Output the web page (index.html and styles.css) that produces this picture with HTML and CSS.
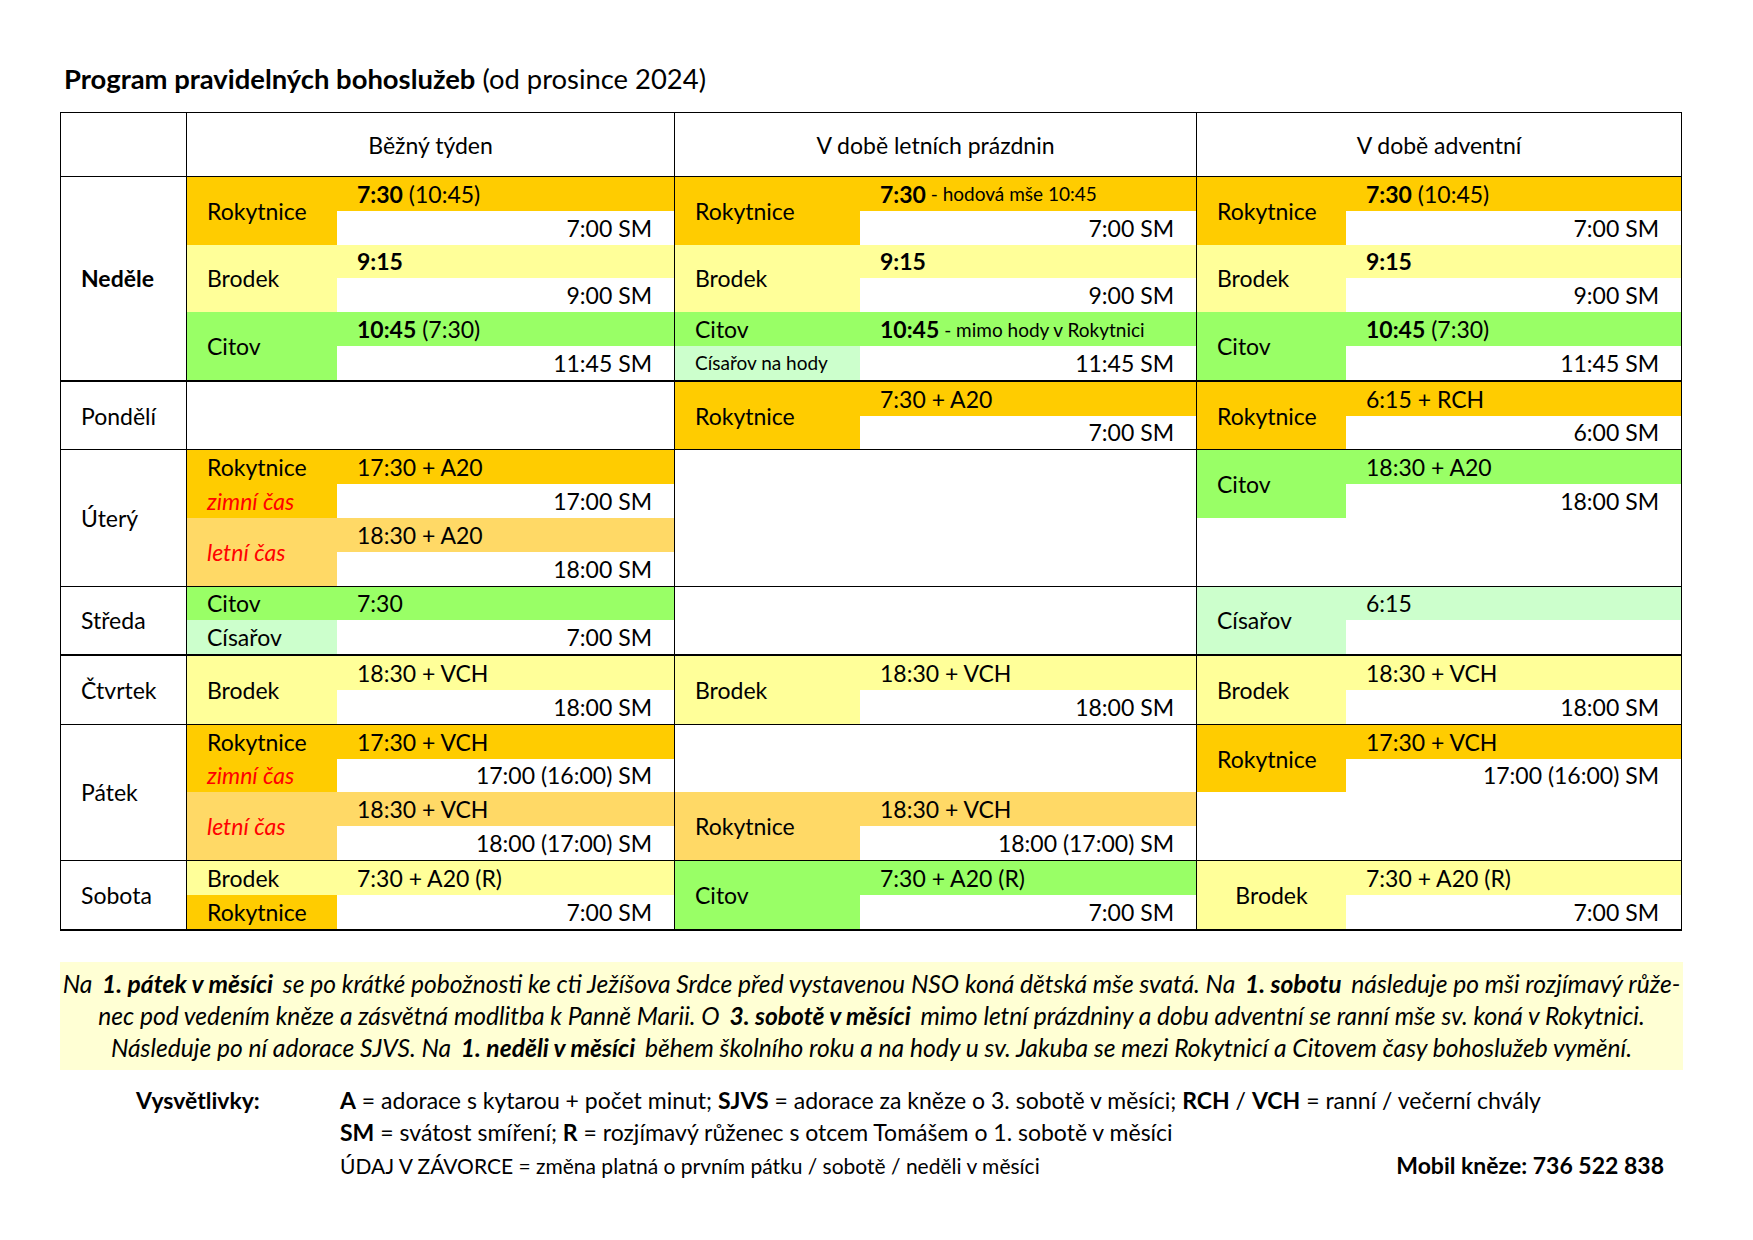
FILE: index.html
```html
<!DOCTYPE html>
<html lang="cs">
<head>
<meta charset="utf-8">
<title>Program pravidelných bohoslužeb</title>
<link rel="stylesheet" href="styles.css">
</head>
<body>
<div class="page">
  <h1 class="title"><b>Program pravidelných bohoslužeb</b> (od prosince 2024)</h1>

  <table class="sched-table">
    <colgroup>
      <col class="col-day">
      <col class="col-b">
      <col class="col-l">
      <col class="col-a">
    </colgroup>
    <tr class="head">
      <th></th>
      <th>Běžný týden</th>
      <th>V době letních prázdnin</th>
      <th>V době adventní</th>
    </tr>

    <!-- Neděle -->
    <tr class="thick">
      <th class="day bold">Neděle</th>
      <td class="c2"><div class="sched">
        <div class="pl or s2">Rokytnice</div><div class="tm or"><b>7:30</b>&nbsp;(10:45)</div><div class="sm">7:00 SM</div>
        <div class="pl ye s2">Brodek</div><div class="tm ye"><b>9:15</b></div><div class="sm">9:00 SM</div>
        <div class="pl gr s2">Citov</div><div class="tm gr"><b>10:45</b>&nbsp;(7:30)</div><div class="sm">11:45 SM</div>
      </div></td>
      <td class="c3"><div class="sched">
        <div class="pl or s2">Rokytnice</div><div class="tm or"><b>7:30</b><span class="sml">&nbsp;- hodová mše 10:45</span></div><div class="sm">7:00 SM</div>
        <div class="pl ye s2">Brodek</div><div class="tm ye"><b>9:15</b></div><div class="sm">9:00 SM</div>
        <div class="pl gr">Citov</div><div class="tm gr"><b>10:45</b><span class="sml">&nbsp;- mimo hody v Rokytnici</span></div>
        <div class="pl lg sml">Císařov na hody</div><div class="sm">11:45 SM</div>
      </div></td>
      <td class="c4"><div class="sched">
        <div class="pl or s2">Rokytnice</div><div class="tm or"><b>7:30</b>&nbsp;(10:45)</div><div class="sm">7:00 SM</div>
        <div class="pl ye s2">Brodek</div><div class="tm ye"><b>9:15</b></div><div class="sm">9:00 SM</div>
        <div class="pl gr s2">Citov</div><div class="tm gr"><b>10:45</b>&nbsp;(7:30)</div><div class="sm">11:45 SM</div>
      </div></td>
    </tr>

    <!-- Pondělí -->
    <tr>
      <th class="day">Pondělí</th>
      <td class="c2"></td>
      <td class="c3"><div class="sched">
        <div class="pl or s2">Rokytnice</div><div class="tm or">7:30 + A20</div><div class="sm">7:00 SM</div>
      </div></td>
      <td class="c4"><div class="sched">
        <div class="pl or s2">Rokytnice</div><div class="tm or">6:15 + RCH</div><div class="sm">6:00 SM</div>
      </div></td>
    </tr>

    <!-- Úterý -->
    <tr>
      <th class="day">Úterý</th>
      <td class="c2"><div class="sched">
        <div class="pl or">Rokytnice</div><div class="tm or">17:30 + A20</div>
        <div class="pl or red">zimní čas</div><div class="sm">17:00 SM</div>
        <div class="pl lo s2 red">letní čas</div><div class="tm lo">18:30 + A20</div><div class="sm">18:00 SM</div>
      </div></td>
      <td class="c3"></td>
      <td class="c4"><div class="sched">
        <div class="pl gr s2">Citov</div><div class="tm gr">18:30 + A20</div><div class="sm">18:00 SM</div>
        <div class="blank s2"></div>
      </div></td>
    </tr>

    <!-- Středa -->
    <tr class="thick">
      <th class="day">Středa</th>
      <td class="c2"><div class="sched">
        <div class="pl gr">Citov</div><div class="tm gr">7:30</div>
        <div class="pl lg">Císařov</div><div class="sm">7:00 SM</div>
      </div></td>
      <td class="c3"></td>
      <td class="c4"><div class="sched">
        <div class="pl lg s2">Císařov</div><div class="tm lg">6:15</div><div class="sm"></div>
      </div></td>
    </tr>

    <!-- Čtvrtek -->
    <tr>
      <th class="day">Čtvrtek</th>
      <td class="c2"><div class="sched">
        <div class="pl ye s2">Brodek</div><div class="tm ye">18:30 + VCH</div><div class="sm">18:00 SM</div>
      </div></td>
      <td class="c3"><div class="sched">
        <div class="pl ye s2">Brodek</div><div class="tm ye">18:30 + VCH</div><div class="sm">18:00 SM</div>
      </div></td>
      <td class="c4"><div class="sched">
        <div class="pl ye s2">Brodek</div><div class="tm ye">18:30 + VCH</div><div class="sm">18:00 SM</div>
      </div></td>
    </tr>

    <!-- Pátek -->
    <tr>
      <th class="day">Pátek</th>
      <td class="c2"><div class="sched">
        <div class="pl or">Rokytnice</div><div class="tm or">17:30 + VCH</div>
        <div class="pl or red">zimní čas</div><div class="sm">17:00 (16:00) SM</div>
        <div class="pl lo s2 red">letní čas</div><div class="tm lo">18:30 + VCH</div><div class="sm">18:00 (17:00) SM</div>
      </div></td>
      <td class="c3"><div class="sched">
        <div class="blank s2"></div>
        <div class="pl lo s2">Rokytnice</div><div class="tm lo">18:30 + VCH</div><div class="sm">18:00 (17:00) SM</div>
      </div></td>
      <td class="c4"><div class="sched">
        <div class="pl or s2">Rokytnice</div><div class="tm or">17:30 + VCH</div><div class="sm">17:00 (16:00) SM</div>
        <div class="blank s2"></div>
      </div></td>
    </tr>

    <!-- Sobota -->
    <tr class="thick">
      <th class="day">Sobota</th>
      <td class="c2"><div class="sched">
        <div class="pl ye">Brodek</div><div class="tm ye">7:30 + A20 (R)</div>
        <div class="pl or">Rokytnice</div><div class="sm">7:00 SM</div>
      </div></td>
      <td class="c3"><div class="sched">
        <div class="pl gr s2">Citov</div><div class="tm gr">7:30 + A20 (R)</div><div class="sm">7:00 SM</div>
      </div></td>
      <td class="c4"><div class="sched">
        <div class="pl ye s2 center">Brodek</div><div class="tm ye">7:30 + A20 (R)</div><div class="sm">7:00 SM</div>
      </div></td>
    </tr>
  </table>

  <div class="note">
    <div class="note-line">Na <b>1. pátek v měsíci</b> se po krátké pobožnosti ke cti Ježíšova Srdce před vystavenou NSO koná dětská mše svatá. Na <b>1. sobotu</b> následuje po mši rozjímavý růže-</div>
    <div class="note-line">nec pod vedením kněze a zásvětná modlitba k Panně Marii. O <b>3. sobotě v měsíci</b> mimo letní prázdniny a dobu adventní se ranní mše sv. koná v Rokytnici.</div>
    <div class="note-line">Následuje po ní adorace SJVS. Na <b>1. neděli v měsíci</b> během školního roku a na hody u sv. Jakuba se mezi Rokytnicí a Citovem časy bohoslužeb vymění.</div>
  </div>

  <div class="legend">
    <div class="legend-label">Vysvětlivky:</div>
    <div class="legend-body">
      <div class="legend-line"><b>A</b> = adorace s kytarou + počet minut; <b>SJVS</b> = adorace za kněze o 3. sobotě v měsíci; <b>RCH</b> / <b>VCH</b> = ranní / večerní chvály</div>
      <div class="legend-line"><b>SM</b> = svátost smíření; <b>R</b> = rozjímavý růženec s otcem Tomášem o 1. sobotě v měsíci</div>
      <div class="legend-line last"><span class="legend-small">ÚDAJ V ZÁVORCE = změna platná o prvním pátku / sobotě / neděli v měsíci</span><b class="mobil">Mobil kněze: 736 522 838</b></div>
    </div>
  </div>
</div>
</body>
</html>
```

FILE: styles.css
```css
* { box-sizing: border-box; }

body {
  margin: 0;
  background: #fff;
  color: #000;
  font-family: Lato, "Open Sans", "DejaVu Sans", sans-serif;
}

.page {
  width: 1753px;
  padding: 63px 72px 0 60px;
}

.title {
  margin: 0 0 17px 4px;
  font-size: 27.4px;
  line-height: 32px;
  font-weight: 400;
}
.title b { font-weight: 700; }

/* ---------- table ---------- */
.sched-table {
  border-collapse: collapse;
  table-layout: fixed;
  width: 1621px;
  font-size: 23px;
}
.col-day { width: 126px; }
.col-b { width: 488px; }
.col-l { width: 522px; }
.col-a { width: 485px; }

.sched-table th,
.sched-table td {
  border: 1px solid #000;
  padding: 0;
  vertical-align: top;
}

.head th {
  height: 64px;
  font-weight: 400;
  text-align: center;
  vertical-align: middle;
}

.sched-table th.day {
  text-align: left;
  vertical-align: middle;
  padding-left: 20px;
  font-weight: 400;
}
.sched-table th.day.bold { font-weight: 700; }

.thick th,
.thick td { border-bottom-width: 2px; }

.sched {
  display: grid;
  grid-auto-rows: 33.8px;
}
.c2 .sched { grid-template-columns: 150px 1fr; }
.c3 .sched { grid-template-columns: 185px 1fr; }
.c4 .sched { grid-template-columns: 149px 1fr; }

.pl, .tm, .sm {
  display: flex;
  align-items: center;
  white-space: nowrap;
}
.pl { padding-left: 20px; }
.pl.center { justify-content: center; padding-left: 0; }
.tm { padding-left: 20px; }
.sm {
  justify-content: flex-end;
  padding-right: 22px;
  background: #fff;
}
.s2 { grid-row: span 2; }
.blank {
  grid-column: 1 / -1;
  background: #fff;
}

.tm b { font-weight: 700; }
.sml { font-size: 19px; }
.red { color: #ff0000; font-style: italic; }

.or { background: #ffcc00; }
.ye { background: #ffff99; }
.gr { background: #99ff66; }
.lg { background: #ccffcc; }
.lo { background: #ffd966; }

/* ---------- note ---------- */
.note {
  width: 1623px;
  margin-top: 31px;
  padding: 6px 0 6px;
  background: #ffffd4;
  font-style: italic;
  font-size: 24.6px;
  line-height: 32px;
  text-align: center;
}
.note-line { white-space: nowrap; }
.note b { font-weight: 700; margin: 0 4px; }

/* ---------- legend ---------- */
.legend {
  display: grid;
  grid-template-columns: 204px 1fr;
  width: 1623px;
  margin-top: 14px;
  padding: 0 19px 0 76px;
  font-size: 23px;
  line-height: 32.5px;
}
.legend-label { font-weight: 700; }
.legend-line { white-space: nowrap; }
.legend-line.last {
  display: flex;
  justify-content: space-between;
  align-items: baseline;
}
.legend-small { font-size: 21px; }
.mobil { font-weight: 700; }
```
